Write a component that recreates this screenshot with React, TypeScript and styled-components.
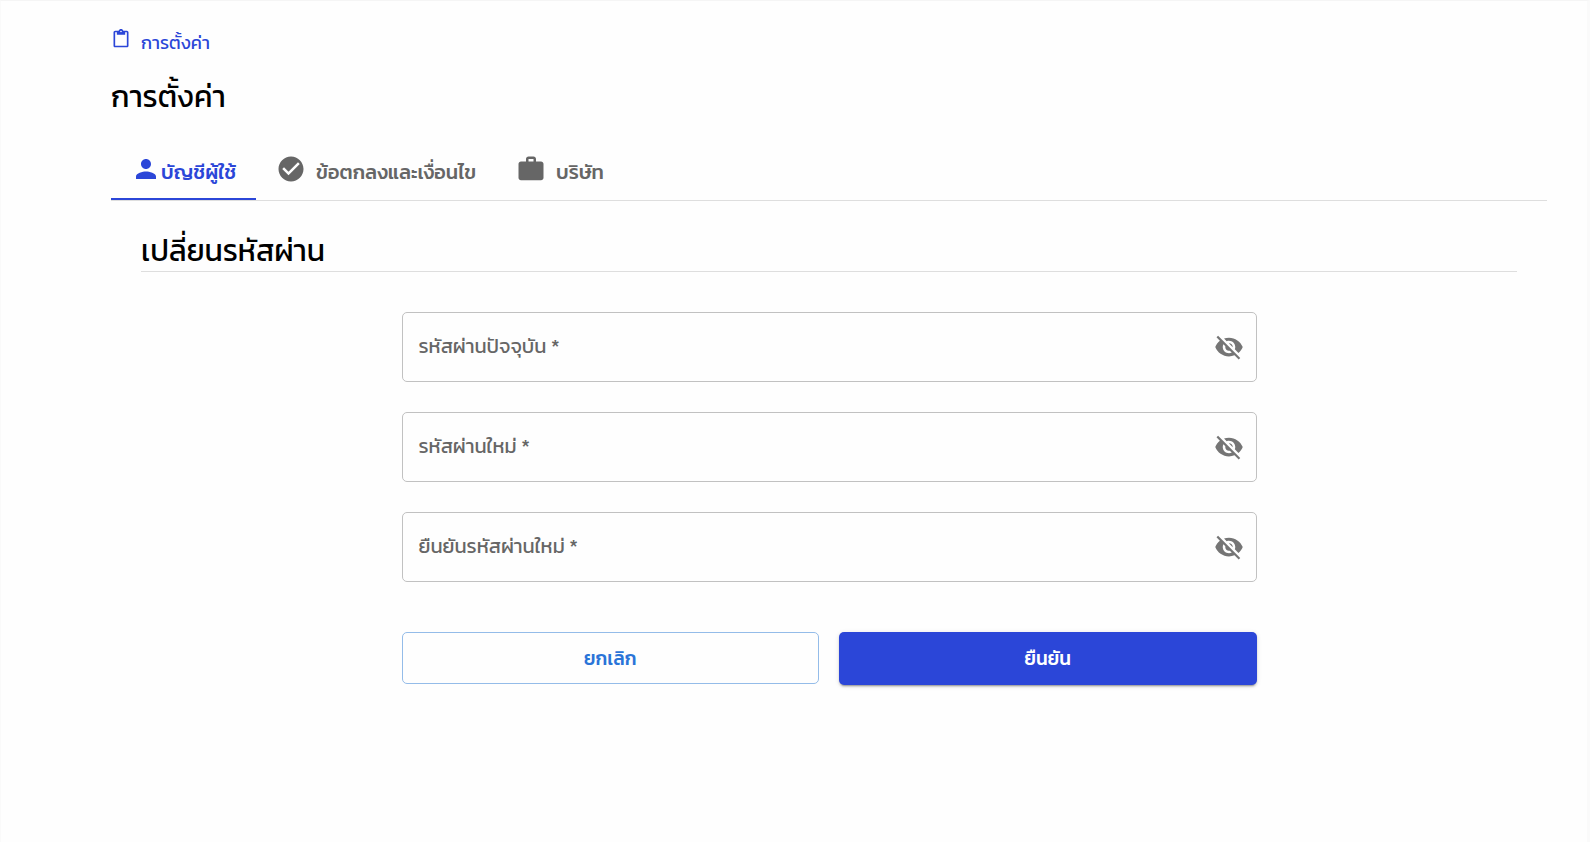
import React, { useState } from "react";
import styled, { createGlobalStyle } from "styled-components";

const fontStack = `Kanit, Prompt, "Noto Sans Thai", "Noto Sans", sans-serif`;

const GlobalStyle = createGlobalStyle`
  *, *::before, *::after { box-sizing: border-box; }
  body {
    margin: 0;
    background: #fefefe;
    color: #000;
    font-family: ${fontStack};
  }
  button, input { font-family: inherit; }
`;

const Page = styled.main`
  min-height: 100vh;
  padding: 24px 40px 40px 110px;
  border: solid #fafafa;
  border-width: 1px 3px 0 1px;
  border-top-color: #f5f5f5;
`;

const Breadcrumb = styled.nav`
  display: flex;
  height: 36px;
`;

const BreadcrumbLink = styled.a`
  display: flex;
  gap: 10px;
  color: #2b46d8;
  font-size: 18px;
  line-height: 35px;
  text-decoration: none;

  svg { margin-top: 4px; }
`;

const PageTitle = styled.h1`
  margin: 12px 0 0;
  font-size: 30px;
  line-height: 48px;
  font-weight: 400;
`;

const TabList = styled.div`
  display: flex;
  height: 61px;
  margin-top: 19px;
  border-bottom: 1px solid #dedede;
`;

const Tab = styled.button<{ $active?: boolean; $gap: number }>`
  display: flex;
  align-items: center;
  gap: ${({ $gap }) => $gap}px;
  padding: 6px 20px 0;
  border: 0;
  border-bottom: 2px solid ${({ $active }) => ($active ? "#2b46d8" : "transparent")};
  background: none;
  color: ${({ $active }) => ($active ? "#2b46d8" : "#666")};
  font-size: 20px;
  line-height: 30px;
  font-weight: 500;
  white-space: nowrap;
  cursor: pointer;
`;

const Panel = styled.section`
  padding: 30px 30px 0;
`;

const SectionTitle = styled.h2`
  margin: 0;
  border-bottom: 1px solid #dedede;
  font-size: 30px;
  line-height: 40px;
  font-weight: 400;
`;

const Form = styled.form`
  display: flex;
  flex-direction: column;
  gap: 30px;
  width: 100%;
  max-width: 855px;
  margin: 40px auto 0;
`;

const FieldBox = styled.div`
  display: flex;
  align-items: center;
  height: 70px;
  padding: 0 12px 0 16px;
  border: 1px solid #c1c1c1;
  border-radius: 5px;

  &:focus-within { border-color: #2b46d8; }
`;

const FieldLabel = styled.label`
  padding-bottom: 2px;
  color: #666;
  font-size: 20px;
  line-height: 30px;
  white-space: nowrap;
`;

const FieldInput = styled.input`
  flex: 1;
  min-width: 0;
  height: 100%;
  padding: 0 12px;
  border: 0;
  outline: 0;
  background: none;
  font-size: 20px;
`;

const IconButton = styled.button`
  display: flex;
  padding: 0;
  border: 0;
  background: none;
  color: #757575;
  cursor: pointer;
`;

const Actions = styled.div`
  display: grid;
  grid-template-columns: 1fr 1fr;
  align-items: start;
  gap: 20px;
  margin-top: 20px;
`;

const ActionButton = styled.button<{ $primary?: boolean }>`
  height: ${({ $primary }) => ($primary ? 53 : 52)}px;
  padding: ${({ $primary }) => ($primary ? 0 : 2)}px 0 0;
  border: ${({ $primary }) => ($primary ? "0" : "1px solid #94bce9")};
  border-radius: 5px;
  background: ${({ $primary }) => ($primary ? "#2b46d8" : "transparent")};
  color: ${({ $primary }) => ($primary ? "#fff" : "#2a74d8")};
  box-shadow: ${({ $primary }) =>
    $primary
      ? "0 3px 1px -2px rgba(0,0,0,.2), 0 2px 2px rgba(0,0,0,.14), 0 1px 5px rgba(0,0,0,.12)"
      : "none"};
  font-size: 19px;
  line-height: 30px;
  font-weight: 500;
  cursor: pointer;
`;

const paths = {
  clipboard:
    "M19 2h-4.18C14.4.84 13.3 0 12 0S9.600.84 9.180 2H5c-1.100 0-2 .9-2 2v16c0 1.100.9 2 2 2h14c1.100 0 2-.9 2-2V4c0-1.100-.9-2-2-2zm-7 0c.55 0 1 .45 1 1s-.45 1-1 1-1-.45-1-1 .45-1 1-1zm7 18H5V4h2v3h10V4h2v16z",
  person:
    "M12 12c2.210 0 4-1.790 4-4s-1.790-4-4-4-4 1.790-4 4 1.790 4 4 4zm0 2c-2.670 0-8 1.340-8 4v2h16v-2c0-2.660-5.330-4-8-4z",
  check:
    "M12 2C6.480 2 2 6.480 2 12s4.480 10 10 10 10-4.480 10-10S17.520 2 12 2zm-2 15l-5-5 1.410-1.410L10 14.170l7.590-7.590L19 8l-9 9z",
  work:
    "M20 6h-4V4c0-1.110-.89-2-2-2h-4c-1.110 0-2 .89-2 2v2H4c-1.110 0-1.990.89-1.990 2L2 19c0 1.110.89 2 2 2h16c1.110 0 2-.89 2-2V8c0-1.110-.89-2-2-2zm-6 0h-4V4h4v2z",
  eyeOff:
    "M12 7c2.760 0 5 2.240 5 5 0 .65-.13 1.260-.36 1.830l2.920 2.920c1.510-1.260 2.700-2.890 3.430-4.750-1.730-4.390-6-7.500-11-7.500-1.400 0-2.740.25-3.980.7l2.160 2.160C10.740 7.130 11.350 7 12 7zM2 4.270l2.280 2.280.46.46C3.080 8.300 1.780 10.020 1 12c1.730 4.390 6 7.500 11 7.500 1.550 0 3.030-.3 4.380-.84l.42.42L19.730 22 21 20.730 3.270 3 2 4.270zM7.530 9.800l1.550 1.550c-.05.21-.08.43-.08.65 0 1.660 1.340 3 3 3 .22 0 .44-.03.65-.08l1.550 1.550c-.67.33-1.410.53-2.200.53-2.760 0-5-2.240-5-5 0-.79.2-1.530.53-2.200zm4.310-.78l3.150 3.150.02-.16c0-1.660-1.340-3-3-3l-.17.01z",
};

function Icon({ name, size = 30 }: { name: keyof typeof paths; size?: number }) {
  return (
    <svg width={size} height={size} viewBox="0 0 24 24" fill="currentColor" aria-hidden="true">
      <path d={paths[name]} />
    </svg>
  );
}

const TabIcon = styled.span`
  display: flex;
  margin-bottom: 6px;
`;

function PasswordField({ id, label }: { id: string; label: string }) {
  const [visible, setVisible] = useState(false);
  return (
    <FieldBox>
      <FieldLabel htmlFor={id}>{label} *</FieldLabel>
      <FieldInput id={id} type={visible ? "text" : "password"} required />
      <IconButton type="button" aria-label={label} onClick={() => setVisible(!visible)}>
        <Icon name="eyeOff" />
      </IconButton>
    </FieldBox>
  );
}

export default function App() {
  return (
    <>
      <GlobalStyle />
      <Page lang="th">
        <Breadcrumb>
          <BreadcrumbLink href="#settings">
            <Icon name="clipboard" size={20} />
            การตั้งค่า
          </BreadcrumbLink>
        </Breadcrumb>
        <PageTitle>การตั้งค่า</PageTitle>
        <TabList role="tablist">
          <Tab role="tab" aria-selected="true" $active $gap={0}>
            <TabIcon><Icon name="person" /></TabIcon>
            บัญชีผู้ใช้
          </Tab>
          <Tab role="tab" aria-selected="false" $gap={10}>
            <TabIcon><Icon name="check" /></TabIcon>
            ข้อตกลงและเงื่อนไข
          </Tab>
          <Tab role="tab" aria-selected="false" $gap={10}>
            <TabIcon><Icon name="work" /></TabIcon>
            บริษัท
          </Tab>
        </TabList>
        <Panel role="tabpanel">
          <SectionTitle>เปลี่ยนรหัสผ่าน</SectionTitle>
          <Form onSubmit={(event) => event.preventDefault()}>
            <PasswordField id="current-password" label="รหัสผ่านปัจจุบัน" />
            <PasswordField id="new-password" label="รหัสผ่านใหม่" />
            <PasswordField id="confirm-password" label="ยืนยันรหัสผ่านใหม่" />
            <Actions>
              <ActionButton type="button">ยกเลิก</ActionButton>
              <ActionButton type="submit" $primary>ยืนยัน</ActionButton>
            </Actions>
          </Form>
        </Panel>
      </Page>
    </>
  );
}
